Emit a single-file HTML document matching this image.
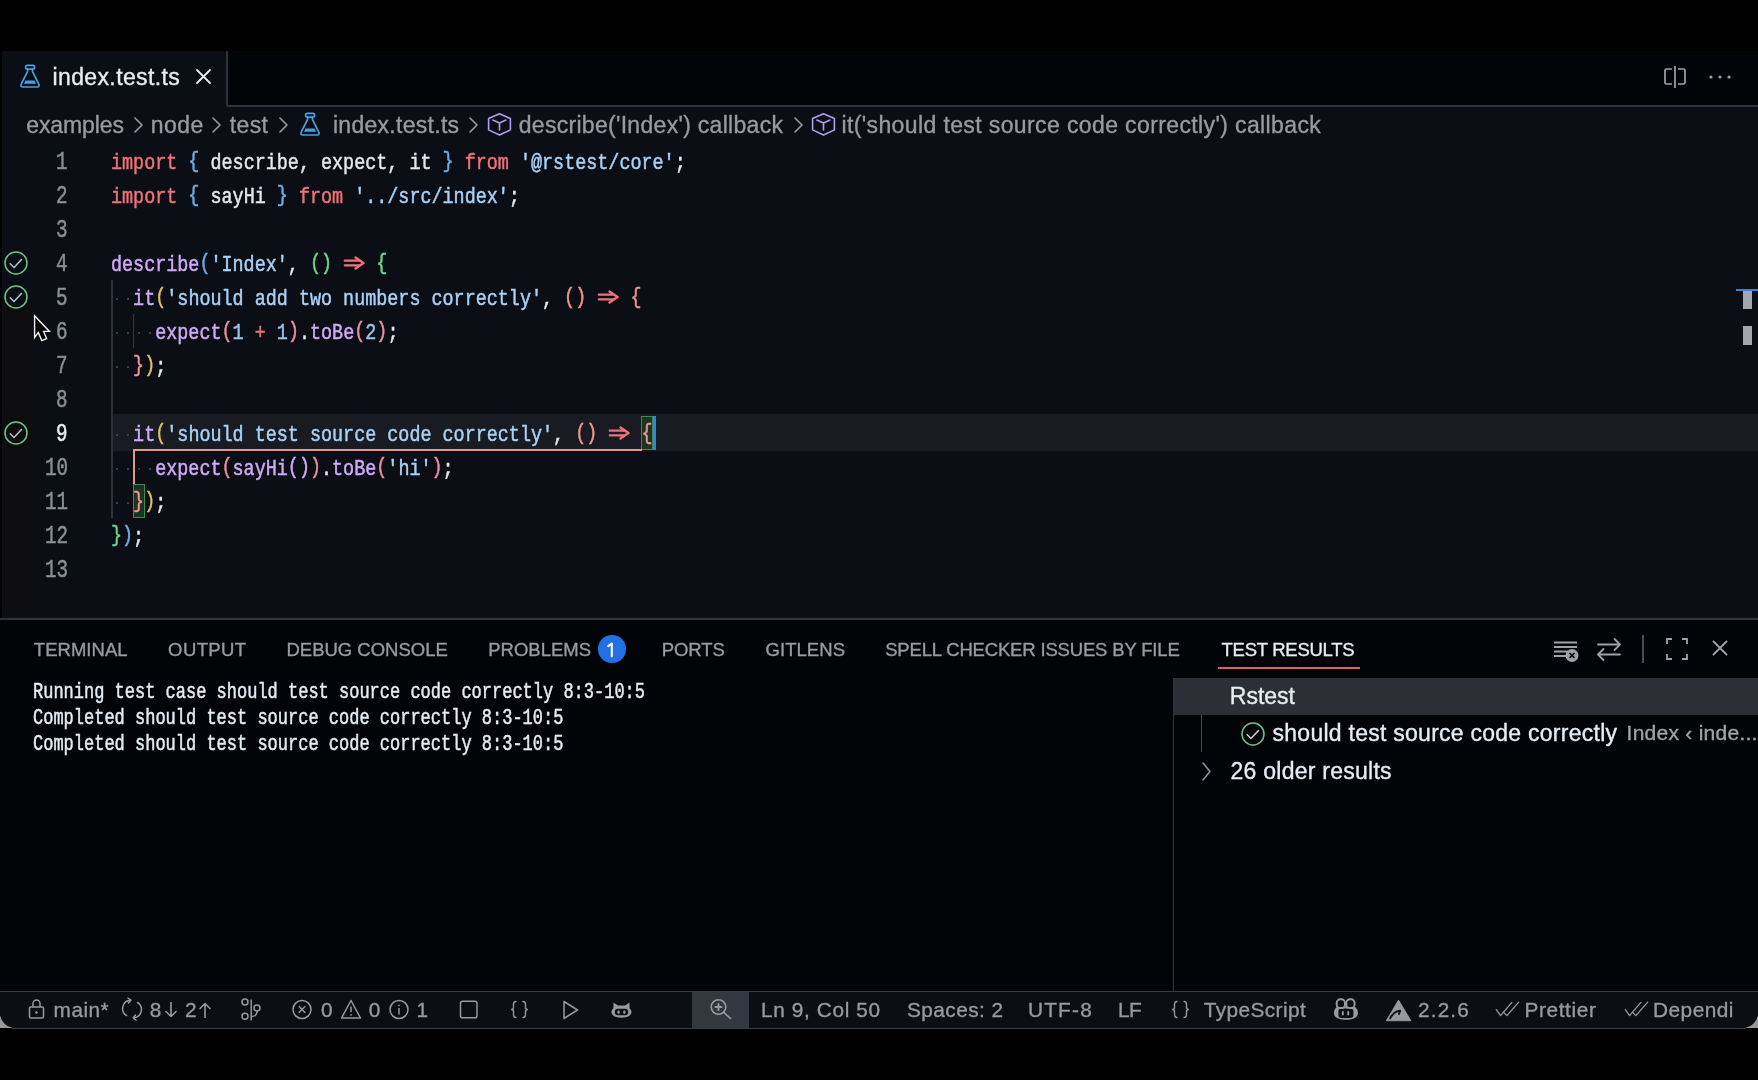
<!DOCTYPE html><html><head><meta charset="utf-8"><style>
html,body{margin:0;padding:0;width:1758px;height:1080px;overflow:hidden;background:#000;}
.t,.r,.s{position:absolute;white-space:pre;}
.t{font-kerning:normal;-webkit-font-smoothing:antialiased;-webkit-text-stroke:0.35px currentColor;}
#root{position:absolute;left:0;top:0;width:1758px;height:1080px;will-change:transform;}
</style></head><body><div id="root">
<div class="r" style="left:2px;top:51px;width:1756px;height:55px;background:#030408;"></div>
<div class="r" style="left:2px;top:51px;width:224px;height:55px;background:#0b0e15;"></div>
<div class="r" style="left:226px;top:51px;width:2px;height:55px;background:#2f343c;"></div>
<svg class="s" style="left:11.5px;top:60px;" width="36" height="34" viewBox="0 0 36 34"><g fill="none" stroke="#4a9fe0" stroke-width="1.7" stroke-linejoin="round" stroke-linecap="round"><rect x="13.6" y="5.4" width="9" height="3.7" rx="1.8"/><path d="M15.6 9.1V11.4L9.2 24.2Q8 27 11 27H25Q28 27 26.8 24.2L20.4 11.4V9.1"/></g><path d="M13.4 20.6H22.6L24 23.8H12Z" fill="#4a9fe0"/></svg>
<div class="t" style="left:52.46px;top:66.33px;font-family:'Liberation Sans', sans-serif;font-size:23px;line-height:23px;height:23px;color:#e6edf3;letter-spacing:0.387px;">index.test.ts</div>
<svg class="s" style="left:195px;top:68px;" width="17" height="17" viewBox="0 0 17 17"><path d="M2 2L15 15M15 2L2 15" stroke="#e6edf3" stroke-width="1.8" stroke-linecap="round"/></svg>
<svg class="s" style="left:1662px;top:64px;" width="26" height="26" viewBox="0 0 26 26"><g fill="none" stroke="#9ea3aa" stroke-width="1.7"><path d="M10 5H4.5a1.5 1.5 0 0 0-1.5 1.5v12a1.5 1.5 0 0 0 1.5 1.5H10"/><path d="M16 5h5.5A1.5 1.5 0 0 1 23 6.5v12a1.5 1.5 0 0 1-1.5 1.5H16"/><path d="M13 2v22"/></g></svg>
<svg class="s" style="left:1708px;top:70px;" width="26" height="14" viewBox="0 0 26 14"><g fill="#9ea3aa"><circle cx="3" cy="7" r="1.6"/><circle cx="12" cy="7" r="1.6"/><circle cx="21" cy="7" r="1.6"/></g></svg>
<div class="r" style="left:2px;top:106px;width:1756px;height:512px;background:#0b0e15;"></div>
<div class="r" style="left:227px;top:105px;width:1531px;height:2px;background:#2f343c;"></div>
<div class="t" style="left:26.22px;top:113.83px;font-family:'Liberation Sans', sans-serif;font-size:23px;line-height:23px;height:23px;color:#999ba0;letter-spacing:-0.09px;">examples</div>
<svg class="s" style="left:132.5px;top:117px;" width="11" height="16" viewBox="0 0 11 16"><path d="M2 1L9 8.0L2 15" fill="none" stroke="#999ba0" stroke-width="1.6" stroke-linecap="round" stroke-linejoin="round"/></svg>
<div class="t" style="left:150.77px;top:113.83px;font-family:'Liberation Sans', sans-serif;font-size:23px;line-height:23px;height:23px;color:#999ba0;letter-spacing:0.461px;">node</div>
<svg class="s" style="left:211px;top:117px;" width="11" height="16" viewBox="0 0 11 16"><path d="M2 1L9 8.0L2 15" fill="none" stroke="#999ba0" stroke-width="1.6" stroke-linecap="round" stroke-linejoin="round"/></svg>
<div class="t" style="left:229.85px;top:113.83px;font-family:'Liberation Sans', sans-serif;font-size:23px;line-height:23px;height:23px;color:#999ba0;letter-spacing:0.348px;">test</div>
<svg class="s" style="left:277.5px;top:117px;" width="11" height="16" viewBox="0 0 11 16"><path d="M2 1L9 8.0L2 15" fill="none" stroke="#999ba0" stroke-width="1.6" stroke-linecap="round" stroke-linejoin="round"/></svg>
<svg class="s" style="left:292px;top:108px;" width="36" height="34" viewBox="0 0 36 34"><g fill="none" stroke="#4a9fe0" stroke-width="1.7" stroke-linejoin="round" stroke-linecap="round"><rect x="13.6" y="5.4" width="9" height="3.7" rx="1.8"/><path d="M15.6 9.1V11.4L9.2 24.2Q8 27 11 27H25Q28 27 26.8 24.2L20.4 11.4V9.1"/></g><path d="M13.4 20.6H22.6L24 23.8H12Z" fill="#4a9fe0"/></svg>
<div class="t" style="left:332.96px;top:113.83px;font-family:'Liberation Sans', sans-serif;font-size:23px;line-height:23px;height:23px;color:#999ba0;letter-spacing:0.287px;">index.test.ts</div>
<svg class="s" style="left:467.5px;top:117px;" width="11" height="16" viewBox="0 0 11 16"><path d="M2 1L9 8.0L2 15" fill="none" stroke="#999ba0" stroke-width="1.6" stroke-linecap="round" stroke-linejoin="round"/></svg>
<svg class="s" style="left:480px;top:108px;" width="40" height="34" viewBox="0 0 40 34"><g fill="none" stroke="#b39df0" stroke-width="1.6" stroke-linejoin="round" stroke-linecap="round"><path d="M19.5 5.8L30.4 10.6V21.9L19.5 27L8.6 21.9V10.6Z"/><path d="M12.9 12.1L19.5 14.9L25.9 12.1M19.5 14.9V22"/></g></svg>
<div class="t" style="left:518.73px;top:113.83px;font-family:'Liberation Sans', sans-serif;font-size:23px;line-height:23px;height:23px;color:#999ba0;letter-spacing:0.298px;">describe(&#x27;Index&#x27;) callback</div>
<svg class="s" style="left:793px;top:117px;" width="11" height="16" viewBox="0 0 11 16"><path d="M2 1L9 8.0L2 15" fill="none" stroke="#999ba0" stroke-width="1.6" stroke-linecap="round" stroke-linejoin="round"/></svg>
<svg class="s" style="left:804px;top:108px;" width="40" height="34" viewBox="0 0 40 34"><g fill="none" stroke="#b39df0" stroke-width="1.6" stroke-linejoin="round" stroke-linecap="round"><path d="M19.5 5.8L30.4 10.6V21.9L19.5 27L8.6 21.9V10.6Z"/><path d="M12.9 12.1L19.5 14.9L25.9 12.1M19.5 14.9V22"/></g></svg>
<div class="t" style="left:841.46px;top:113.83px;font-family:'Liberation Sans', sans-serif;font-size:23px;line-height:23px;height:23px;color:#999ba0;letter-spacing:0.385px;">it(&#x27;should test source code correctly&#x27;) callback</div>
<div class="r" style="left:4px;top:306px;width:28px;height:302px;background:#0e0d10;"></div>
<div class="r" style="left:111px;top:414px;width:1647px;height:37px;background:#181b21;"></div>
<div class="r" style="left:111px;top:280px;width:2px;height:238px;background:#2e333a;"></div>
<div class="r" style="left:133px;top:314px;width:1px;height:34px;background:#30363d;"></div>
<div class="r" style="left:640.5px;top:416px;width:12px;height:34px;background:#1b3323;box-sizing:border-box;border:1.3px solid #3d8d4a;"></div>
<div class="r" style="left:132.5px;top:484px;width:12px;height:34px;background:#1b3323;box-sizing:border-box;border:1.3px solid #3d8d4a;"></div>
<div class="r" style="left:133px;top:448.8px;width:509px;height:1.8px;background:#e2968f;"></div>
<div class="r" style="left:133px;top:448.8px;width:1.8px;height:35px;background:#e2968f;"></div>
<div class="t" style="left:111.0px;top:151.96px;font-family:'Liberation Mono', monospace;font-size:22.5px;line-height:22.5px;height:22.5px;color:#e6e8ec;transform:scaleX(0.8184);transform-origin:0 0;-webkit-text-stroke-width:0.5px;"><span style="color:#f0737a">import</span><span style="color:#e6e8ec"> </span><span style="color:#6eaee8;position:relative;top:-1.8px">{</span><span style="color:#e6e8ec"> describe, expect, it </span><span style="color:#6eaee8;position:relative;top:-1.8px">}</span><span style="color:#e6e8ec"> </span><span style="color:#f0737a">from</span><span style="color:#e6e8ec"> </span><span style="color:#a9d2f7">&#x27;@rstest/core&#x27;</span><span style="color:#e6e8ec">;</span></div>
<div class="t" style="left:111.0px;top:185.96px;font-family:'Liberation Mono', monospace;font-size:22.5px;line-height:22.5px;height:22.5px;color:#e6e8ec;transform:scaleX(0.8184);transform-origin:0 0;-webkit-text-stroke-width:0.5px;"><span style="color:#f0737a">import</span><span style="color:#e6e8ec"> </span><span style="color:#6eaee8;position:relative;top:-1.8px">{</span><span style="color:#e6e8ec"> sayHi </span><span style="color:#6eaee8;position:relative;top:-1.8px">}</span><span style="color:#e6e8ec"> </span><span style="color:#f0737a">from</span><span style="color:#e6e8ec"> </span><span style="color:#a9d2f7">&#x27;../src/index&#x27;</span><span style="color:#e6e8ec">;</span></div>
<div class="t" style="left:111.0px;top:253.96px;font-family:'Liberation Mono', monospace;font-size:22.5px;line-height:22.5px;height:22.5px;color:#e6e8ec;transform:scaleX(0.8184);transform-origin:0 0;-webkit-text-stroke-width:0.5px;"><span style="color:#cfabf7">describe</span><span style="color:#6eaee8;position:relative;top:-1.8px">(</span><span style="color:#a9d2f7">&#x27;Index&#x27;</span><span style="color:#e6e8ec">, </span><span style="color:#72d68a;position:relative;top:-1.8px">()</span><span style="color:#e6e8ec">    </span><span style="color:#72d68a;position:relative;top:-1.8px">{</span></div>
<div class="t" style="left:111.0px;top:287.96px;font-family:'Liberation Mono', monospace;font-size:22.5px;line-height:22.5px;height:22.5px;color:#e6e8ec;transform:scaleX(0.8184);transform-origin:0 0;-webkit-text-stroke-width:0.5px;"><span style="color:#e6e8ec">  </span><span style="color:#cfabf7">it</span><span style="color:#e2bf66;position:relative;top:-1.8px">(</span><span style="color:#a9d2f7">&#x27;should add two numbers correctly&#x27;</span><span style="color:#e6e8ec">, </span><span style="color:#f2948e;position:relative;top:-1.8px">()</span><span style="color:#e6e8ec">    </span><span style="color:#f2948e;position:relative;top:-1.8px">{</span></div>
<div class="t" style="left:111.0px;top:321.96px;font-family:'Liberation Mono', monospace;font-size:22.5px;line-height:22.5px;height:22.5px;color:#e6e8ec;transform:scaleX(0.8184);transform-origin:0 0;-webkit-text-stroke-width:0.5px;"><span style="color:#e6e8ec">    </span><span style="color:#cfabf7">expect</span><span style="color:#ec8fa0;position:relative;top:-1.8px">(</span><span style="color:#9cc4ee">1</span><span style="color:#e6e8ec"> </span><span style="color:#f0737a">+</span><span style="color:#e6e8ec"> </span><span style="color:#9cc4ee">1</span><span style="color:#ec8fa0;position:relative;top:-1.8px">)</span><span style="color:#e6e8ec">.</span><span style="color:#cfabf7">toBe</span><span style="color:#ec8fa0;position:relative;top:-1.8px">(</span><span style="color:#9cc4ee">2</span><span style="color:#ec8fa0;position:relative;top:-1.8px">)</span><span style="color:#e6e8ec">;</span></div>
<div class="t" style="left:111.0px;top:355.96px;font-family:'Liberation Mono', monospace;font-size:22.5px;line-height:22.5px;height:22.5px;color:#e6e8ec;transform:scaleX(0.8184);transform-origin:0 0;-webkit-text-stroke-width:0.5px;"><span style="color:#e6e8ec">  </span><span style="color:#f2948e;position:relative;top:-1.8px">}</span><span style="color:#e2bf66;position:relative;top:-1.8px">)</span><span style="color:#e6e8ec">;</span></div>
<div class="t" style="left:111.0px;top:423.96px;font-family:'Liberation Mono', monospace;font-size:22.5px;line-height:22.5px;height:22.5px;color:#e6e8ec;transform:scaleX(0.8184);transform-origin:0 0;-webkit-text-stroke-width:0.5px;"><span style="color:#e6e8ec">  </span><span style="color:#cfabf7">it</span><span style="color:#e2bf66;position:relative;top:-1.8px">(</span><span style="color:#a9d2f7">&#x27;should test source code correctly&#x27;</span><span style="color:#e6e8ec">, </span><span style="color:#f2948e;position:relative;top:-1.8px">()</span><span style="color:#e6e8ec">    </span><span style="color:#f2948e;position:relative;top:-1.8px">{</span></div>
<div class="t" style="left:111.0px;top:457.96px;font-family:'Liberation Mono', monospace;font-size:22.5px;line-height:22.5px;height:22.5px;color:#e6e8ec;transform:scaleX(0.8184);transform-origin:0 0;-webkit-text-stroke-width:0.5px;"><span style="color:#e6e8ec">    </span><span style="color:#cfabf7">expect</span><span style="color:#ec8fa0;position:relative;top:-1.8px">(</span><span style="color:#cfabf7">sayHi</span><span style="color:#cfabf7;position:relative;top:-1.8px">(</span><span style="color:#cfabf7;position:relative;top:-1.8px">)</span><span style="color:#ec8fa0;position:relative;top:-1.8px">)</span><span style="color:#e6e8ec">.</span><span style="color:#cfabf7">toBe</span><span style="color:#ec8fa0;position:relative;top:-1.8px">(</span><span style="color:#a9d2f7">&#x27;hi&#x27;</span><span style="color:#ec8fa0;position:relative;top:-1.8px">)</span><span style="color:#e6e8ec">;</span></div>
<div class="t" style="left:111.0px;top:491.96px;font-family:'Liberation Mono', monospace;font-size:22.5px;line-height:22.5px;height:22.5px;color:#e6e8ec;transform:scaleX(0.8184);transform-origin:0 0;-webkit-text-stroke-width:0.5px;"><span style="color:#e6e8ec">  </span><span style="color:#f2948e;position:relative;top:-1.8px">}</span><span style="color:#e2bf66;position:relative;top:-1.8px">)</span><span style="color:#e6e8ec">;</span></div>
<div class="t" style="left:111.0px;top:525.96px;font-family:'Liberation Mono', monospace;font-size:22.5px;line-height:22.5px;height:22.5px;color:#e6e8ec;transform:scaleX(0.8184);transform-origin:0 0;-webkit-text-stroke-width:0.5px;"><span style="color:#72d68a;position:relative;top:-1.8px">}</span><span style="color:#6eaee8;position:relative;top:-1.8px">)</span><span style="color:#e6e8ec">;</span></div>
<div class="r" style="left:115.525px;top:297.7px;width:2px;height:2px;background:#484f58;border-radius:1px;"></div>
<div class="r" style="left:126.575px;top:297.7px;width:2px;height:2px;background:#484f58;border-radius:1px;"></div>
<div class="r" style="left:115.525px;top:331.7px;width:2px;height:2px;background:#484f58;border-radius:1px;"></div>
<div class="r" style="left:126.575px;top:331.7px;width:2px;height:2px;background:#484f58;border-radius:1px;"></div>
<div class="r" style="left:137.625px;top:331.7px;width:2px;height:2px;background:#484f58;border-radius:1px;"></div>
<div class="r" style="left:148.675px;top:331.7px;width:2px;height:2px;background:#484f58;border-radius:1px;"></div>
<div class="r" style="left:115.525px;top:365.7px;width:2px;height:2px;background:#484f58;border-radius:1px;"></div>
<div class="r" style="left:126.575px;top:365.7px;width:2px;height:2px;background:#484f58;border-radius:1px;"></div>
<div class="r" style="left:115.525px;top:433.7px;width:2px;height:2px;background:#484f58;border-radius:1px;"></div>
<div class="r" style="left:126.575px;top:433.7px;width:2px;height:2px;background:#484f58;border-radius:1px;"></div>
<div class="r" style="left:115.525px;top:467.7px;width:2px;height:2px;background:#484f58;border-radius:1px;"></div>
<div class="r" style="left:126.575px;top:467.7px;width:2px;height:2px;background:#484f58;border-radius:1px;"></div>
<div class="r" style="left:137.625px;top:467.7px;width:2px;height:2px;background:#484f58;border-radius:1px;"></div>
<div class="r" style="left:148.675px;top:467.7px;width:2px;height:2px;background:#484f58;border-radius:1px;"></div>
<div class="r" style="left:115.525px;top:501.7px;width:2px;height:2px;background:#484f58;border-radius:1px;"></div>
<div class="r" style="left:126.575px;top:501.7px;width:2px;height:2px;background:#484f58;border-radius:1px;"></div>
<svg class="s" style="left:343.05px;top:256.2px;" width="23" height="14" viewBox="0 0 23 14"><g fill="none" stroke="#f0737a" stroke-width="2.3" stroke-linecap="round" stroke-linejoin="round"><path d="M1.8 4.7H16 M1.8 9.3H16"/><path d="M12.5 1.5L20.5 7L12.5 12.5"/></g></svg>
<svg class="s" style="left:597.2px;top:290.2px;" width="23" height="14" viewBox="0 0 23 14"><g fill="none" stroke="#f0737a" stroke-width="2.3" stroke-linecap="round" stroke-linejoin="round"><path d="M1.8 4.7H16 M1.8 9.3H16"/><path d="M12.5 1.5L20.5 7L12.5 12.5"/></g></svg>
<svg class="s" style="left:608.25px;top:426.2px;" width="23" height="14" viewBox="0 0 23 14"><g fill="none" stroke="#f0737a" stroke-width="2.3" stroke-linecap="round" stroke-linejoin="round"><path d="M1.8 4.7H16 M1.8 9.3H16"/><path d="M12.5 1.5L20.5 7L12.5 12.5"/></g></svg>
<div class="r" style="left:653px;top:416px;width:3px;height:34px;background:#2f81f7;"></div>
<div class="t" style="left:56.25px;top:150.05px;font-family:'Liberation Mono', monospace;font-size:25.0px;line-height:25.0px;height:25.0px;color:#8b9097;transform:scaleX(0.77);transform-origin:0 0;-webkit-text-stroke-width:0.5px;">1</div>
<div class="t" style="left:56.25px;top:184.05px;font-family:'Liberation Mono', monospace;font-size:25.0px;line-height:25.0px;height:25.0px;color:#8b9097;transform:scaleX(0.77);transform-origin:0 0;-webkit-text-stroke-width:0.5px;">2</div>
<div class="t" style="left:56.25px;top:218.05px;font-family:'Liberation Mono', monospace;font-size:25.0px;line-height:25.0px;height:25.0px;color:#8b9097;transform:scaleX(0.77);transform-origin:0 0;-webkit-text-stroke-width:0.5px;">3</div>
<div class="t" style="left:56.25px;top:252.05px;font-family:'Liberation Mono', monospace;font-size:25.0px;line-height:25.0px;height:25.0px;color:#8b9097;transform:scaleX(0.77);transform-origin:0 0;-webkit-text-stroke-width:0.5px;">4</div>
<div class="t" style="left:56.25px;top:286.05px;font-family:'Liberation Mono', monospace;font-size:25.0px;line-height:25.0px;height:25.0px;color:#8b9097;transform:scaleX(0.77);transform-origin:0 0;-webkit-text-stroke-width:0.5px;">5</div>
<div class="t" style="left:56.25px;top:320.05px;font-family:'Liberation Mono', monospace;font-size:25.0px;line-height:25.0px;height:25.0px;color:#8b9097;transform:scaleX(0.77);transform-origin:0 0;-webkit-text-stroke-width:0.5px;">6</div>
<div class="t" style="left:56.25px;top:354.05px;font-family:'Liberation Mono', monospace;font-size:25.0px;line-height:25.0px;height:25.0px;color:#8b9097;transform:scaleX(0.77);transform-origin:0 0;-webkit-text-stroke-width:0.5px;">7</div>
<div class="t" style="left:56.25px;top:388.05px;font-family:'Liberation Mono', monospace;font-size:25.0px;line-height:25.0px;height:25.0px;color:#8b9097;transform:scaleX(0.77);transform-origin:0 0;-webkit-text-stroke-width:0.5px;">8</div>
<div class="t" style="left:56.25px;top:422.05px;font-family:'Liberation Mono', monospace;font-size:25.0px;line-height:25.0px;height:25.0px;color:#e6edf3;transform:scaleX(0.77);transform-origin:0 0;-webkit-text-stroke-width:0.5px;">9</div>
<div class="t" style="left:44.7px;top:456.05px;font-family:'Liberation Mono', monospace;font-size:25.0px;line-height:25.0px;height:25.0px;color:#8b9097;transform:scaleX(0.77);transform-origin:0 0;-webkit-text-stroke-width:0.5px;">10</div>
<div class="t" style="left:44.7px;top:490.05px;font-family:'Liberation Mono', monospace;font-size:25.0px;line-height:25.0px;height:25.0px;color:#8b9097;transform:scaleX(0.77);transform-origin:0 0;-webkit-text-stroke-width:0.5px;">11</div>
<div class="t" style="left:44.7px;top:524.05px;font-family:'Liberation Mono', monospace;font-size:25.0px;line-height:25.0px;height:25.0px;color:#8b9097;transform:scaleX(0.77);transform-origin:0 0;-webkit-text-stroke-width:0.5px;">12</div>
<div class="t" style="left:44.7px;top:558.05px;font-family:'Liberation Mono', monospace;font-size:25.0px;line-height:25.0px;height:25.0px;color:#8b9097;transform:scaleX(0.77);transform-origin:0 0;-webkit-text-stroke-width:0.5px;">13</div>
<svg class="s" style="left:3px;top:250px;" width="26" height="26" viewBox="0 0 26 26"><circle cx="13" cy="13" r="11" fill="none" stroke="#6cc487" stroke-width="1.5"/><path d="M7.2 13.8L11 17.5L18.5 9.5" fill="none" stroke="#b9bec6" stroke-width="1.6" stroke-linecap="round" stroke-linejoin="round"/></svg>
<svg class="s" style="left:3px;top:284px;" width="26" height="26" viewBox="0 0 26 26"><circle cx="13" cy="13" r="11" fill="none" stroke="#6cc487" stroke-width="1.5"/><path d="M7.2 13.8L11 17.5L18.5 9.5" fill="none" stroke="#b9bec6" stroke-width="1.6" stroke-linecap="round" stroke-linejoin="round"/></svg>
<svg class="s" style="left:3px;top:420px;" width="26" height="26" viewBox="0 0 26 26"><circle cx="13" cy="13" r="11" fill="none" stroke="#6cc487" stroke-width="1.5"/><path d="M7.2 13.8L11 17.5L18.5 9.5" fill="none" stroke="#b9bec6" stroke-width="1.6" stroke-linecap="round" stroke-linejoin="round"/></svg>
<svg class="s" style="left:30px;top:312px;" width="24" height="32" viewBox="0 0 24 32"><path d="M4.6 3.8V25.6L8.3 20.4L11.8 28.6L16.6 26.6L13.6 19.4H19.4Z" fill="#000" stroke="#f4f4f4" stroke-width="1.4" stroke-linejoin="miter"/></svg>
<div class="r" style="left:1736px;top:289px;width:22px;height:2px;background:#3b82e0;"></div>
<div class="r" style="left:1743px;top:291px;width:9px;height:18px;background:#a3a7ad;"></div>
<div class="r" style="left:1743px;top:326px;width:9px;height:19px;background:#a3a7ad;"></div>
<div class="r" style="left:0px;top:618px;width:1758px;height:2px;background:#2f343c;"></div>
<div class="r" style="left:0px;top:620px;width:1758px;height:371px;background:#030408;"></div>
<div class="t" style="left:33.83px;top:640.54px;font-family:'Liberation Sans', sans-serif;font-size:18.5px;line-height:18.5px;height:18.5px;color:#9a9ca1;letter-spacing:0.034px;">TERMINAL</div>
<div class="t" style="left:168.12px;top:640.54px;font-family:'Liberation Sans', sans-serif;font-size:18.5px;line-height:18.5px;height:18.5px;color:#9a9ca1;letter-spacing:0.4px;">OUTPUT</div>
<div class="t" style="left:286.48px;top:640.54px;font-family:'Liberation Sans', sans-serif;font-size:18.5px;line-height:18.5px;height:18.5px;color:#9a9ca1;letter-spacing:-0.007px;">DEBUG CONSOLE</div>
<div class="t" style="left:488.18px;top:640.54px;font-family:'Liberation Sans', sans-serif;font-size:18.5px;line-height:18.5px;height:18.5px;color:#9a9ca1;letter-spacing:0.009px;">PROBLEMS</div>
<div class="r" style="left:598px;top:635px;width:27.5px;height:27.5px;border-radius:50%;background:#2170e6;"></div>
<svg class="s" style="left:604px;top:641px;" width="14" height="18" viewBox="0 0 14 18"><path d="M4.2 5.2L7.8 2.6V15.2" fill="none" stroke="#fff" stroke-width="2.1" stroke-linecap="round" stroke-linejoin="round"/></svg>
<div class="t" style="left:661.78px;top:640.54px;font-family:'Liberation Sans', sans-serif;font-size:18.5px;line-height:18.5px;height:18.5px;color:#9a9ca1;letter-spacing:-0.091px;">PORTS</div>
<div class="t" style="left:765.47px;top:640.54px;font-family:'Liberation Sans', sans-serif;font-size:18.5px;line-height:18.5px;height:18.5px;color:#9a9ca1;letter-spacing:0.07px;">GITLENS</div>
<div class="t" style="left:885.16px;top:640.54px;font-family:'Liberation Sans', sans-serif;font-size:18.5px;line-height:18.5px;height:18.5px;color:#9a9ca1;letter-spacing:-0.17px;">SPELL CHECKER ISSUES BY FILE</div>
<div class="t" style="left:1221.58px;top:640.54px;font-family:'Liberation Sans', sans-serif;font-size:18.5px;line-height:18.5px;height:18.5px;color:#e6edf3;letter-spacing:-0.28px;">TEST RESULTS</div>
<div class="r" style="left:1218px;top:666.5px;width:142px;height:2.5px;background:#d4625f;"></div>
<svg class="s" style="left:1552px;top:636px;" width="30" height="28" viewBox="0 0 30 28"><g stroke="#9ea3aa" stroke-width="1.8" fill="none"><path d="M2 6.5H25M2 11H25M2 15.5H16M2 20H14"/></g><circle cx="20" cy="19.5" r="6.5" fill="#9ea3aa"/><path d="M17.5 17L22.5 22M22.5 17L17.5 22" stroke="#010409" stroke-width="1.5"/></svg>
<svg class="s" style="left:1595px;top:636px;" width="30" height="27" viewBox="0 0 30 27"><g stroke="#9ea3aa" stroke-width="1.8" fill="none" stroke-linecap="round" stroke-linejoin="round"><path d="M3 8.5H25M19.5 3L25 8.5L19.5 14"/><path d="M25 18.5H3M8.5 13L3 18.5L8.5 24"/></g></svg>
<div class="r" style="left:1642px;top:635px;width:1.5px;height:28px;background:#4a4f57;"></div>
<svg class="s" style="left:1664px;top:636px;" width="26" height="26" viewBox="0 0 26 26"><g stroke="#9ea3aa" stroke-width="1.8" fill="none"><path d="M3 8V3H8M18 3H23V8M23 18V23H18M8 23H3V18"/></g></svg>
<svg class="s" style="left:1710px;top:638px;" width="20" height="20" viewBox="0 0 20 20"><path d="M3 3L17 17M17 3L3 17" stroke="#9ea3aa" stroke-width="1.8"/></svg>
<div class="t" style="left:33px;top:681.53px;font-family:'Liberation Mono', monospace;font-size:21.5px;line-height:21.5px;height:21.5px;color:#e6edf3;transform:scaleX(0.7906);transform-origin:0 0;-webkit-text-stroke-width:0.5px;">Running test case should test source code correctly 8:3-10:5</div>
<div class="t" style="left:33px;top:707.53px;font-family:'Liberation Mono', monospace;font-size:21.5px;line-height:21.5px;height:21.5px;color:#e6edf3;transform:scaleX(0.7906);transform-origin:0 0;-webkit-text-stroke-width:0.5px;">Completed should test source code correctly 8:3-10:5</div>
<div class="t" style="left:33px;top:733.53px;font-family:'Liberation Mono', monospace;font-size:21.5px;line-height:21.5px;height:21.5px;color:#e6edf3;transform:scaleX(0.7906);transform-origin:0 0;-webkit-text-stroke-width:0.5px;">Completed should test source code correctly 8:3-10:5</div>
<div class="r" style="left:1173px;top:678px;width:1px;height:313px;background:#30363d;"></div>
<div class="r" style="left:1174px;top:678px;width:584px;height:37px;background:#2c3036;"></div>
<div class="t" style="left:1229.81px;top:684.93px;font-family:'Liberation Sans', sans-serif;font-size:23px;line-height:23px;height:23px;color:#e6edf3;letter-spacing:-0.005px;">Rstest</div>
<div class="r" style="left:1201px;top:715px;width:1px;height:37px;background:#4a4f57;"></div>
<svg class="s" style="left:1239.5px;top:720.5px;" width="26" height="26" viewBox="0 0 26 26"><circle cx="13" cy="13" r="11" fill="none" stroke="#6cc487" stroke-width="1.5"/><path d="M7.2 13.8L11 17.5L18.5 9.5" fill="none" stroke="#c9ced6" stroke-width="1.6" stroke-linecap="round" stroke-linejoin="round"/></svg>
<div class="t" style="left:1272.56px;top:721.53px;font-family:'Liberation Sans', sans-serif;font-size:23px;line-height:23px;height:23px;color:#e6edf3;letter-spacing:0.258px;">should test source code correctly</div>
<div class="t" style="left:1626.56px;top:722.42px;font-family:'Liberation Sans', sans-serif;font-size:21px;line-height:21px;height:21px;color:#a2a4a8;letter-spacing:0.258px;">Index ‹ inde...</div>
<svg class="s" style="left:1201px;top:762px;" width="11" height="19" viewBox="0 0 11 19"><path d="M2 1L9 9.5L2 18" fill="none" stroke="#8b949e" stroke-width="1.6" stroke-linecap="round" stroke-linejoin="round"/></svg>
<div class="t" style="left:1230.54px;top:759.93px;font-family:'Liberation Sans', sans-serif;font-size:23px;line-height:23px;height:23px;color:#e6edf3;letter-spacing:0.256px;">26 older results</div>
<div class="r" style="left:0px;top:991px;width:1758px;height:1px;background:#3a3f47;"></div>
<div class="r" style="left:0px;top:992px;width:1758px;height:36px;background:#0b0e15;"></div>
<svg class="s" style="left:27px;top:997px;" width="20" height="24" viewBox="0 0 20 24"><g fill="none" stroke="#979aa0" stroke-width="1.5"><rect x="2.5" y="10" width="14" height="11" rx="1.5"/><path d="M6 10V6.5a3.5 3.5 0 0 1 7 0V10"/></g><circle cx="9.5" cy="15.5" r="1.3" fill="#979aa0"/></svg>
<div class="t" style="left:53.62px;top:1000.39px;font-family:'Liberation Sans', sans-serif;font-size:20.8px;line-height:20.8px;height:20.8px;color:#979aa0;letter-spacing:0.457px;">main*</div>
<svg class="s" style="left:121px;top:997px;" width="22" height="24" viewBox="0 0 22 24"><g fill="none" stroke="#979aa0" stroke-width="1.5" stroke-linecap="round" stroke-linejoin="round"><path d="M9.5 3.2A8.3 8.3 0 0 0 5.5 18.5"/><path d="M12.5 20.8A8.3 8.3 0 0 0 16.5 5.5"/><path d="M7 1L9.8 3.2L7.5 6"/><path d="M15 23L12.2 20.8L14.5 18"/></g></svg>
<div class="t" style="left:149.8px;top:1000.39px;font-family:'Liberation Sans', sans-serif;font-size:20.8px;line-height:20.8px;height:20.8px;color:#979aa0;">8</div>
<svg class="s" style="left:164.5px;top:1002px;" width="12" height="16" viewBox="0 0 12 16"><path d="M6 0.5V14.5M1 9.5L6 14.5L11 9.5" fill="none" stroke="#979aa0" stroke-width="1.6" stroke-linecap="round" stroke-linejoin="round"/></svg>
<div class="t" style="left:184.95px;top:1000.39px;font-family:'Liberation Sans', sans-serif;font-size:20.8px;line-height:20.8px;height:20.8px;color:#979aa0;">2</div>
<svg class="s" style="left:199px;top:1002px;" width="12" height="16" viewBox="0 0 12 16"><path d="M6 1.5V15.5M1 6.5L6 1.5L11 6.5" fill="none" stroke="#979aa0" stroke-width="1.6" stroke-linecap="round" stroke-linejoin="round"/></svg>
<svg class="s" style="left:239px;top:997px;" width="25" height="25" viewBox="0 0 25 25"><g fill="none" stroke="#979aa0" stroke-width="1.5"><circle cx="6" cy="5" r="3"/><circle cx="6" cy="19.3" r="3"/><circle cx="18" cy="10.9" r="3"/><path d="M12.2 2.5V23.5"/><path d="M18 14C18 18 16 19.5 12.2 19.5"/></g></svg>
<svg class="s" style="left:291px;top:999px;" width="23" height="21" viewBox="0 0 23 21"><g fill="none" stroke="#979aa0" stroke-width="1.5"><circle cx="11" cy="10.5" r="9"/><path d="M7.8 7.3L14.2 13.7M14.2 7.3L7.8 13.7"/></g></svg>
<div class="t" style="left:320.99px;top:1000.39px;font-family:'Liberation Sans', sans-serif;font-size:20.8px;line-height:20.8px;height:20.8px;color:#979aa0;">0</div>
<svg class="s" style="left:339px;top:998px;" width="24" height="22" viewBox="0 0 24 22"><g fill="none" stroke="#979aa0" stroke-width="1.5" stroke-linejoin="round"><path d="M12 2.5L21.5 20H2.5Z"/><path d="M12 8.5V14M12 16.3V17.8"/></g></svg>
<div class="t" style="left:368.79px;top:1000.39px;font-family:'Liberation Sans', sans-serif;font-size:20.8px;line-height:20.8px;height:20.8px;color:#979aa0;">0</div>
<svg class="s" style="left:388px;top:999px;" width="23" height="21" viewBox="0 0 23 21"><g fill="none" stroke="#979aa0" stroke-width="1.5"><circle cx="11" cy="10.5" r="9"/><path d="M11 9V15.5M11 5.8V7.3"/></g></svg>
<div class="t" style="left:416.42px;top:1000.39px;font-family:'Liberation Sans', sans-serif;font-size:20.8px;line-height:20.8px;height:20.8px;color:#979aa0;">1</div>
<svg class="s" style="left:458px;top:999px;" width="22" height="22" viewBox="0 0 22 22"><rect x="2.5" y="2.3" width="16.5" height="16.5" rx="2" fill="none" stroke="#979aa0" stroke-width="1.5"/></svg>
<svg class="s" style="left:510px;top:1000px;" width="20" height="20" viewBox="0 0 20 20"><g fill="none" stroke="#979aa0" stroke-width="1.4" stroke-linecap="round"><path d="M6 1.5C4 1.5 3.5 2.5 3.5 4.5V7.5C3.5 8.8 2.8 9.5 1.2 9.5C2.8 9.5 3.5 10.2 3.5 11.5V14.5C3.5 16.5 4 17.5 6 17.5"/><path d="M13 1.5C15 1.5 15.5 2.5 15.5 4.5V7.5C15.5 8.8 16.2 9.5 17.8 9.5C16.2 9.5 15.5 10.2 15.5 11.5V14.5C15.5 16.5 15 17.5 13 17.5"/></g></svg>
<svg class="s" style="left:561px;top:999px;" width="20" height="22" viewBox="0 0 20 22"><path d="M3 2.5L16.5 11L3 19.5Z" fill="none" stroke="#979aa0" stroke-width="1.5" stroke-linejoin="round"/></svg>
<svg class="s" style="left:609px;top:998px;" width="25" height="23" viewBox="0 0 25 23"><g transform="translate(1.6,1.9) scale(0.87)"><path d="M3.2 9.5L3.4 3L8.3 6.5H16.7L21.6 3L21.8 9.5C23.2 10.8 24 12.3 24 14C24 18 19.5 20.5 12.5 20.5C5.5 20.5 1 18 1 14C1 12.3 1.8 10.8 3.2 9.5Z" fill="#979aa0"/><rect x="4.8" y="10.3" width="15.4" height="7.4" rx="3.7" fill="#0b0e15"/><g fill="#979aa0"><ellipse cx="9.2" cy="14" rx="1.4" ry="2.2"/><ellipse cx="15.8" cy="14" rx="1.4" ry="2.2"/></g></g></svg>
<div class="r" style="left:692px;top:992px;width:57px;height:36px;background:#33373f;"></div>
<svg class="s" style="left:707px;top:996px;" width="28" height="26" viewBox="0 0 28 26"><g fill="none" stroke="#979aa0" stroke-width="1.6" stroke-linecap="round"><circle cx="11.5" cy="11" r="7.3"/><path d="M16.8 16.3L23.5 22.5"/><path d="M11.5 8V14M8.5 11H14.5" stroke-width="1.9"/></g></svg>
<div class="t" style="left:761.09px;top:1000.39px;font-family:'Liberation Sans', sans-serif;font-size:20.8px;line-height:20.8px;height:20.8px;color:#979aa0;letter-spacing:0.623px;">Ln 9, Col 50</div>
<div class="t" style="left:907.06px;top:1000.39px;font-family:'Liberation Sans', sans-serif;font-size:20.8px;line-height:20.8px;height:20.8px;color:#979aa0;letter-spacing:0.436px;">Spaces: 2</div>
<div class="t" style="left:1027.9px;top:1000.39px;font-family:'Liberation Sans', sans-serif;font-size:20.8px;line-height:20.8px;height:20.8px;color:#979aa0;letter-spacing:1.221px;">UTF-8</div>
<div class="t" style="left:1117.99px;top:1000.39px;font-family:'Liberation Sans', sans-serif;font-size:20.8px;line-height:20.8px;height:20.8px;color:#979aa0;letter-spacing:-0.434px;">LF</div>
<svg class="s" style="left:1171px;top:1000px;" width="20" height="20" viewBox="0 0 20 20"><g fill="none" stroke="#979aa0" stroke-width="1.4" stroke-linecap="round"><path d="M6 1.5C4 1.5 3.5 2.5 3.5 4.5V7.5C3.5 8.8 2.8 9.5 1.2 9.5C2.8 9.5 3.5 10.2 3.5 11.5V14.5C3.5 16.5 4 17.5 6 17.5"/><path d="M13 1.5C15 1.5 15.5 2.5 15.5 4.5V7.5C15.5 8.8 16.2 9.5 17.8 9.5C16.2 9.5 15.5 10.2 15.5 11.5V14.5C15.5 16.5 15 17.5 13 17.5"/></g></svg>
<div class="t" style="left:1203.83px;top:1000.39px;font-family:'Liberation Sans', sans-serif;font-size:20.8px;line-height:20.8px;height:20.8px;color:#979aa0;letter-spacing:0.401px;">TypeScript</div>
<svg class="s" style="left:1325px;top:994px;" width="36" height="30" viewBox="0 0 36 30"><path d="M9 19.2C9 15.6 10.6 13 13.2 12.8H28.6C31.2 13 32.9 15.6 32.9 19.2C32.9 23.6 28 25.7 21 25.7C14 25.7 9 23.6 9 19.2Z" fill="#979aa0"/><rect x="13.4" y="14.6" width="15" height="9.4" rx="3" fill="#0b0e15"/><g fill="#979aa0"><rect x="16.9" y="17.1" width="1.9" height="4.4" rx="0.9"/><rect x="22.3" y="17.1" width="1.9" height="4.4" rx="0.9"/></g><g fill="#0b0e15" stroke="#979aa0" stroke-width="2"><rect x="11.7" y="5.3" width="8.3" height="8.8" rx="3.6"/><rect x="21.3" y="5.3" width="8.3" height="8.8" rx="3.6"/></g></svg>
<svg class="s" style="left:1385px;top:998px;" width="27" height="24" viewBox="0 0 27 24"><path d="M13.5 2L26 22.8H1.2Z" fill="#979aa0" stroke="#979aa0" stroke-width="0.8" stroke-linejoin="round"/><path d="M5.2 20.3C7 16.5 10.5 13.2 15.2 12.6L14 16" fill="none" stroke="#0b0e15" stroke-width="1.9" stroke-linecap="round" stroke-linejoin="round"/></svg>
<div class="t" style="left:1417.95px;top:1000.39px;font-family:'Liberation Sans', sans-serif;font-size:20.8px;line-height:20.8px;height:20.8px;color:#979aa0;letter-spacing:1.175px;">2.2.6</div>
<svg class="s" style="left:1495px;top:1000px;" width="25" height="18" viewBox="0 0 25 18"><g fill="none" stroke="#979aa0" stroke-width="1.3" stroke-linecap="round" stroke-linejoin="round"><path d="M1.3 9.6L5.6 15.6L16.9 2.4"/><path d="M8.4 12.1L11.9 15.6L23.7 2.1"/></g></svg>
<div class="t" style="left:1524.49px;top:1000.39px;font-family:'Liberation Sans', sans-serif;font-size:20.8px;line-height:20.8px;height:20.8px;color:#979aa0;letter-spacing:0.616px;">Prettier</div>
<svg class="s" style="left:1623.5px;top:1000px;" width="25" height="18" viewBox="0 0 25 18"><g fill="none" stroke="#979aa0" stroke-width="1.3" stroke-linecap="round" stroke-linejoin="round"><path d="M1.3 9.6L5.6 15.6L16.9 2.4"/><path d="M8.4 12.1L11.9 15.6L23.7 2.1"/></g></svg>
<div class="t" style="left:1653.09px;top:1000.39px;font-family:'Liberation Sans', sans-serif;font-size:20.8px;line-height:20.8px;height:20.8px;color:#979aa0;letter-spacing:0.471px;">Dependi</div>
<div class="r" style="left:1173px;top:985px;width:1px;height:6px;background:#30363d;"></div>
<div class="r" style="left:0;top:1016px;width:12px;height:12px;background:#9a9a9a;"></div>
<div class="r" style="left:0;top:1008px;width:20px;height:20px;background:#0b0e15;border-bottom-left-radius:15px;"></div>
<div class="r" style="left:1746px;top:1016px;width:12px;height:12px;background:#9a9a9a;"></div>
<div class="r" style="left:1738px;top:1008px;width:20px;height:20px;background:#0b0e15;border-bottom-right-radius:15px;"></div>
<div class="r" style="left:12px;top:1028px;width:1734px;height:1px;background:#3a3d44;"></div>
</div></body></html>
